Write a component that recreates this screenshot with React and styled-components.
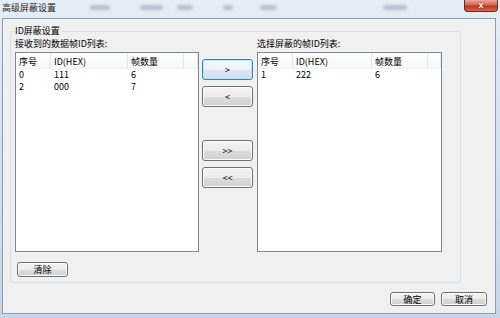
import React from 'react';
import styled, { createGlobalStyle } from 'styled-components';

const GlobalStyle = createGlobalStyle`
  html, body { margin: 0; padding: 0; }
  body {
    width: 500px;
    height: 318px;
    overflow: hidden;
    font-family: "Noto Sans CJK SC", "Liberation Sans", sans-serif;
    font-size: 9px;
    color: #000;
  }
`;

const Window = styled.div`
  width: 500px;
  height: 318px;
  box-sizing: border-box;
  display: flex;
  flex-direction: column;
  padding: 0 4px 4px 2px;
  background: linear-gradient(180deg, #e6eef7 0%, #d8e4f1 30%, #c6d6e8 100%);
`;

const TitleBar = styled.div`
  height: 18px;
  flex: none;
  display: flex;
  align-items: flex-start;
`;

const Title = styled.div`
  width: 50px;
  flex: none;
  padding-top: 2px;
  line-height: 12px;
  white-space: nowrap;
  color: #1e1e1e;
`;

// blurred shapes of the window behind the glass
const Smudge = styled.span`
  flex: none;
  width: ${p => p.$w}px;
  height: 5px;
  margin: 5px 0 0 ${p => p.$ml}px;
  border-radius: 3px;
  background: rgba(95, 108, 125, 0.35);
  filter: blur(1.5px);
`;

const CloseButton = styled.div`
  margin-left: auto;
  margin-right: -2px;
  width: 34px;
  height: 12px;
  border: 1px solid #6b2a22;
  border-top: none;
  border-radius: 0 0 4px 4px;
  box-sizing: border-box;
  background: linear-gradient(180deg, #e9a99c 0%, #d7634f 45%, #c1351e 55%, #d36a4c 100%);
  display: flex;
  align-items: center;
  justify-content: center;
  color: #fff;
  font-family: "Liberation Sans", sans-serif;
  font-size: 9px;
  font-weight: bold;
  line-height: 1;
  text-shadow: 0 0 2px #5a1a10;
`;

const Client = styled.div`
  flex: 1;
  display: flex;
  flex-direction: column;
  background: #f0f0f0;
  border: 1px solid #8d9db0;
`;

const Group = styled.fieldset`
  width: 451px;
  box-sizing: border-box;
  min-width: 0;
  margin: 6px 0 0 7px;
  padding: 1px 0 5px 4px;
  border: 1px solid #d5dfe5;
  border-radius: 3px;
  display: flex;
  flex-direction: column;
  align-items: flex-start;
`;

const Legend = styled.legend`
  padding: 0 2px 0 0;
  line-height: 12px;
`;

const Panels = styled.div`
  display: flex;
  align-items: flex-start;
`;

const Panel = styled.div`
  width: ${p => p.$w}px;
  display: flex;
  flex-direction: column;
`;

const Caption = styled.div`
  line-height: 12px;
  margin-bottom: 2px;
  white-space: nowrap;
`;

const ListBox = styled.div`
  height: 200px;
  box-sizing: border-box;
  border: 1px solid #828790;
  background: #fff;
`;

const HeaderRow = styled.div`
  display: flex;
  height: 16px;
  background: linear-gradient(180deg, #ffffff 0%, #f6f7f8 100%);
  border-bottom: 1px solid #eef0f2;
  box-sizing: border-box;
`;

const HeaderCell = styled.div`
  flex: ${p => (p.$w ? `0 0 ${p.$w}px` : '1')};
  box-sizing: border-box;
  padding: 3px 0 0 3px;
  line-height: 11px;
  border-right: 1px solid #e3e5e8;
  white-space: nowrap;
`;

const Row = styled.div`
  display: flex;
  height: 12px;
  line-height: 12px;
`;

const Cell = styled.div`
  flex: 0 0 ${p => p.$w}px;
  box-sizing: border-box;
  padding-left: 3px;
  white-space: nowrap;
`;

const Middle = styled.div`
  width: 51px;
  margin: 0 4px 0 3px;
  padding-top: 21px;
  display: flex;
  flex-direction: column;
  gap: 6px;
`;

const Spacer = styled.div`
  height: 21px;
`;

const Button = styled.button`
  width: ${p => p.$w}px;
  height: ${p => p.$h}px;
  padding: 0;
  box-sizing: border-box;
  border: 1px solid ${p => (p.$focus ? '#3c7fb1' : '#707070')};
  border-radius: 3px;
  background: ${p =>
    p.$focus
      ? 'linear-gradient(180deg, #f5fafd 0%, #eaf2f8 50%, #dbe7f0 51%, #d2e0ea 100%)'
      : 'linear-gradient(180deg, #f4f4f4 0%, #ebebeb 50%, #dddddd 51%, #d0d0d0 100%)'};
  box-shadow: inset 0 0 0 1px ${p => (p.$focus ? '#c4e5f6' : '#fcfcfc')};
  font-family: "Noto Sans CJK SC", "Liberation Sans", sans-serif;
  font-size: 9px;
  line-height: 1;
  color: #000;
  flex: none;
`;

const ClearButton = styled(Button)`
  margin: 10px 0 0 2px;
`;

const Footer = styled.div`
  display: flex;
  justify-content: flex-end;
  gap: 6px;
  margin-top: 9px;
  padding-right: 8px;
`;

const columns = [35, 77, 56];

const leftRows = [
  ['0', '111', '6'],
  ['2', '000', '7'],
];

const rightRows = [['1', '222', '6']];

const IdList = ({ widths, rows }) => (
  <ListBox>
    <HeaderRow>
      <HeaderCell $w={widths[0]}>序号</HeaderCell>
      <HeaderCell $w={widths[1]}>ID(HEX)</HeaderCell>
      <HeaderCell $w={widths[2]}>帧数量</HeaderCell>
      <HeaderCell />
    </HeaderRow>
    {rows.map(r => (
      <Row key={r[0]}>
        {r.map((v, i) => (
          <Cell key={i} $w={widths[i]}>{v}</Cell>
        ))}
      </Row>
    ))}
  </ListBox>
);

const App = () => {
  return (
    <>
      <GlobalStyle />
      <Window>
        <TitleBar>
          <Title>高级屏蔽设置</Title>
          <Smudge $ml={38} $w={20} />
          <Smudge $ml={30} $w={23} />
          <Smudge $ml={14} $w={16} />
          <Smudge $ml={30} $w={10} />
          <Smudge $ml={27} $w={17} />
          <Smudge $ml={106} $w={24} />
          <CloseButton>x</CloseButton>
        </TitleBar>
        <Client>
          <Group>
            <Legend>ID屏蔽设置</Legend>
            <Panels>
              <Panel $w={184}>
                <Caption>接收到的数据帧ID列表:</Caption>
                <IdList widths={columns} rows={leftRows} />
              </Panel>
              <Middle>
                <Button $w={51} $h={21} $focus>&gt;</Button>
                <Button $w={51} $h={21}>&lt;</Button>
                <Spacer />
                <Button $w={51} $h={21}>&gt;&gt;</Button>
                <Button $w={51} $h={21}>&lt;&lt;</Button>
              </Middle>
              <Panel $w={185}>
                <Caption>选择屏蔽的帧ID列表:</Caption>
                <IdList widths={[35, 79, 56]} rows={rightRows} />
              </Panel>
            </Panels>
            <ClearButton $w={51} $h={15}>清除</ClearButton>
          </Group>
          <Footer>
            <Button $w={45} $h={14}>确定</Button>
            <Button $w={46} $h={14}>取消</Button>
          </Footer>
        </Client>
      </Window>
    </>
  );
};

export default App;
